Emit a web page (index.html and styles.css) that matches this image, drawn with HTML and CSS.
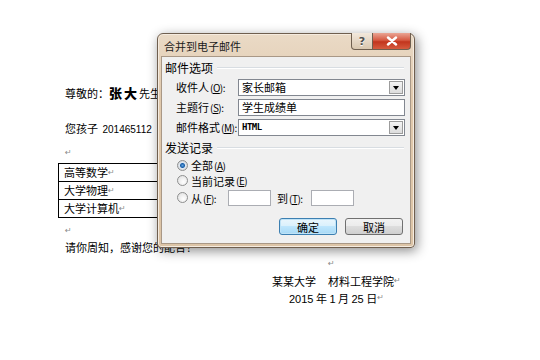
FILE: index.html
```html
<!DOCTYPE html>
<html lang="zh-CN">
<head>
    <meta charset="UTF-8">
    <title>合并到电子邮件</title>
    <link rel="stylesheet" href="styles.css">
</head>
<body>
    <div class="doc">
        <p class="line first">尊敬的：<b class="name">张大</b>先生</p>
        <p class="line second">您孩子 <span class="num id">201465112</span></p>
        <p class="line mark-line"><span class="mark">↵</span></p>
        <table class="grades">
            <tr><td>高等数学<span class="mark">↵</span></td><td></td></tr>
            <tr><td>大学物理<span class="mark">↵</span></td><td></td></tr>
            <tr><td>大学计算机<span class="mark">↵</span></td><td></td></tr>
        </table>
        <p class="line after-table"><span class="mark">↵</span></p>
        <p class="line">请你周知，感谢您的配合！</p>
        <p class="line right r1"><span class="mark">↵</span></p>
        <p class="line right r2">某某大学<span class="sp"></span>材料工程学院<span class="mark">↵</span></p>
        <p class="line right r3"><span class="num">2015</span> 年 <span class="num">1</span> 月 <span class="num">25</span> 日<span class="mark">↵</span></p>
    </div>

    <div class="dialog">
        <div class="titlebar">
            <span class="title">合并到电子邮件</span>
            <div class="caption-buttons">
                <div class="cap help">?</div>
                <div class="cap close">
                    <svg width="12" height="10" viewBox="0 0 12 10">
                        <path d="M2 1.5 L10 8.5 M10 1.5 L2 8.5" stroke="#ffffff" stroke-width="2.4" stroke-linecap="round"/>
                    </svg>
                </div>
            </div>
        </div>
        <div class="client">
            <div class="group-title"><span>邮件选项</span></div>
            <div class="fields">
                <label>收件人<span class="key">(<u>O</u>):</span></label>
                <div class="combo"><span class="value">家长邮箱</span><span class="drop"></span></div>
                <label>主题行<span class="key">(<u>S</u>):</span></label>
                <div class="textbox">学生成绩单</div>
                <label>邮件格式<span class="key">(<u>M</u>):</span></label>
                <div class="combo"><span class="value latin">HTML</span><span class="drop"></span></div>
            </div>
            <div class="group-title second-group"><span>发送记录</span></div>
            <div class="radio-row r-all"><span class="radio checked"></span>全部<span class="key">(<u>A</u>)</span></div>
            <div class="radio-row r-cur"><span class="radio"></span>当前记录<span class="key">(<u>E</u>)</span></div>
            <div class="radio-row r-from">
                <span class="radio"></span><span class="from-label">从<span class="key">(<u>F</u>):</span></span>
                <div class="textbox small"></div>
                <span class="to-label">到<span class="key">(<u>T</u>):</span></span>
                <div class="textbox small"></div>
            </div>
            <div class="buttons">
                <button class="btn default">确定</button>
                <button class="btn">取消</button>
            </div>
        </div>
    </div>
</body>
</html>
```

FILE: styles.css
```css
body {
    margin: 0;
    background-color: #ffffff;
    font-family: "Noto Sans CJK SC", "Noto Sans", sans-serif;
    color: #000;
    width: 540px;
    height: 360px;
    overflow: hidden;
    position: relative;
}
.doc {
    padding-top: 85px;
    padding-left: 65px;
    font-size: 11px;
}
.line {
    margin: 0;
    height: 16px;
    line-height: 16px;
    white-space: nowrap;
}
.second {
    margin-top: 19px;
}
.mark-line {
    margin-top: 9px;
}
.name {
    font-weight: 900;
    font-size: 13px;
    letter-spacing: 2px;
}
.num {
    font-family: "Liberation Sans", Arial, sans-serif;
    font-size: 11px;
}
.num.id {
    font-size: 10px;
    margin-left: 2px;
}
.mark {
    color: #8a8a8a;
    font-family: "DejaVu Sans", sans-serif;
    font-size: 8px;
    vertical-align: top;
}
.grades {
    margin-top: 2px;
    margin-left: -7px;
    border-collapse: collapse;
    width: 220px;
}
.grades td {
    border: 1px solid #000;
    padding: 0 0 0 5px;
    height: 17px;
    line-height: 17px;
}
.after-table {
    margin-top: 5px;
}
.right {
    padding-left: 207px;
}
.r1 {
    margin-top: 1px;
    padding-left: 263px;
}
.r2 {
    margin-top: 1px;
}
.r3 {
    margin-top: 1px;
    padding-left: 224px;
}
.sp {
    display: inline-block;
    width: 12px;
}

/* dialog window */
.dialog {
    position: absolute;
    left: 157px;
    top: 33px;
    width: 256px;
    height: 213px;
    border: 1px solid #6f5f4f;
    border-radius: 6px 6px 4px 4px;
    background: linear-gradient(#eadac6, #e0c9ad 30%, #dcc4a6);
    box-shadow: 2px 3px 12px rgba(0, 0, 0, 0.45), inset 0 0 0 1px #f5ebdf;
    font-size: 11px;
}
.titlebar {
    height: 22px;
    position: relative;
}
.title {
    position: absolute;
    left: 6px;
    top: 4px;
    line-height: 16px;
    color: #1a1a1a;
}
.caption-buttons {
    position: absolute;
    right: 3px;
    top: -1px;
    display: flex;
}
.cap {
    height: 17px;
    border: 1px solid #6f5f4f;
    border-top: none;
    display: flex;
    align-items: center;
    justify-content: center;
    box-sizing: border-box;
}
.help {
    width: 22px;
    border-radius: 0 0 0 4px;
    background: linear-gradient(#f2e8dc, #d9c7af);
    color: #4e4e4e;
    font-family: "DejaVu Sans", sans-serif;
    font-size: 11px;
    font-weight: bold;
    text-shadow: 0 1px 0 #fff;
}
.close {
    width: 38px;
    border-left: none;
    border-radius: 0 0 4px 0;
    background: linear-gradient(#eaa594, #d65a42 45%, #c2351d 55%, #d65b3e);
}
.key {
    font-size: 10px;
    letter-spacing: -0.5px;
    margin-left: 1px;
}
.client {
    margin: 0 3px 0 3px;
    height: 188px;
    box-sizing: border-box;
    border: 1px solid #a99886;
    background-color: #f0f0f0;
    padding: 2px 6px 0 3px;
}
.group-title {
    height: 18px;
    line-height: 18px;
    display: flex;
    align-items: center;
    font-size: 12px;
}
.group-title::after {
    content: "";
    flex: 1;
    height: 1px;
    background-color: #d8dde2;
    border-bottom: 1px solid #fff;
    margin-left: 4px;
}
.second-group {
    margin-top: 3px;
}
.fields {
    margin-top: 2px;
    padding-left: 11px;
    display: grid;
    grid-template-columns: 62px 167px;
    grid-auto-rows: 17px;
    row-gap: 3px;
    align-items: center;
}
.fields label {
    white-space: nowrap;
    line-height: 17px;
}
.combo, .textbox {
    height: 17px;
    box-sizing: border-box;
    background-color: #fff;
    border: 1px solid #828790;
    display: flex;
    align-items: center;
    font-size: 11px;
    line-height: 15px;
}
.combo .value {
    flex: 1;
    padding-left: 3px;
}
.textbox {
    padding-left: 3px;
}
.latin {
    font-family: "DejaVu Sans Mono", monospace;
    font-size: 9px;
    font-weight: bold;
    letter-spacing: -0.5px;
}
.drop {
    width: 14px;
    height: 13px;
    margin-right: 1px;
    box-sizing: border-box;
    border: 1px solid #9c9c9c;
    background: linear-gradient(#f4f4f4, #dcdcdc);
    position: relative;
}
.drop::after {
    content: "";
    position: absolute;
    left: 3px;
    top: 4px;
    border-left: 3px solid transparent;
    border-right: 3px solid transparent;
    border-top: 4px solid #000;
}
.radio-row {
    display: flex;
    align-items: center;
    padding-left: 12px;
    white-space: nowrap;
}
.r-all {
    height: 16px;
}
.r-cur {
    height: 15px;
}
.r-from {
    height: 17px;
    margin-top: 1px;
}
.radio {
    width: 9px;
    height: 9px;
    border: 1px solid #8e8f8f;
    border-radius: 50%;
    background: radial-gradient(circle at 60% 65%, #ffffff, #dcdcdc);
    margin-right: 3px;
}
.radio.checked {
    background: radial-gradient(circle, #5fa3e0 0, #1b5fa8 2px, #dfe8f2 3px, #d6d6d6 5px);
}
.from-label {
    width: 37px;
}
.textbox.small {
    width: 43px;
    height: 16px;
    border-color: #abadb3;
}
.to-label {
    width: 40px;
    padding-left: 6px;
    box-sizing: border-box;
}
.buttons {
    display: flex;
    justify-content: flex-end;
    gap: 8px;
    margin-top: 12px;
    padding-right: 1px;
}
.btn {
    width: 58px;
    height: 17px;
    padding: 0;
    border: 1px solid #707070;
    border-radius: 3px;
    background: linear-gradient(#f2f2f2, #ebebeb 50%, #dddddd 50%, #cfcfcf);
    font-family: "Noto Sans CJK SC", sans-serif;
    font-size: 11px;
    line-height: 14px;
    color: #000;
}
.btn.default {
    border-color: #3c7fb1;
    box-shadow: inset 0 0 0 1px #bfe3f7;
    background: linear-gradient(#eaf6fd, #d9f0fc 50%, #bee6fd 50%, #a7d9f5);
}
```
